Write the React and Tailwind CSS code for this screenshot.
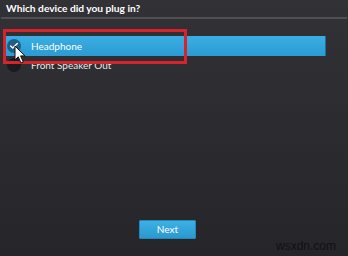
import { Check } from "lucide-react";

function Radio({ checked }) {
  return (
    <span
      className={
        checked
          ? "flex h-[14px] w-[14px] items-center justify-center rounded-full bg-[#1f5f86]"
          : "flex h-[14px] w-[14px] items-center justify-center rounded-full bg-[#1b1b1d]"
      }
    >
      {checked && <Check size={10} strokeWidth={3.5} className="text-white" />}
    </span>
  );
}

export default function App() {
  return (
    <div
      className="relative flex h-[256px] w-[348px] flex-col overflow-hidden bg-gradient-to-b from-[#323135] to-[#262529] text-white"
      style={{ fontFamily: 'Lato, "Open Sans", sans-serif' }}
    >
      <header className="flex h-[17px] items-center px-[6px]">
        <h1 className="text-[10.2px] font-bold leading-none">Which device did you plug in?</h1>
      </header>
      <div className="mx-[1px] h-[2px] bg-[#4f4e52]" />

      <ul className="mt-[17px] flex flex-col">
        <li className="ml-[4px] flex h-[20px] w-[322px] items-center gap-[10px] border-r border-[#1e6e9c] bg-gradient-to-b from-[#3aaee3] to-[#2b9bd3] pl-[3px]">
          <Radio checked />
          <span className="text-[10px] leading-none">Headphone</span>
        </li>
        <li className="flex h-[17px] items-center gap-[10px] pl-[7px]">
          <Radio />
          <span className="text-[10px] leading-none text-[#e8e8ea]">Front Speaker Out</span>
        </li>
      </ul>

      <div className="mt-auto mb-[17px] flex justify-center pr-[13px]">
        <button
          type="button"
          className="h-[19px] w-[57px] rounded-[1px] border border-[#2686b8] bg-gradient-to-b from-[#3cb0e4] to-[#2b99d0] text-[10px] text-white"
        >
          Next
        </button>
      </div>

      <div className="pointer-events-none absolute left-[3px] top-[29px] h-[35px] w-[184px] border-[3px] border-[#d8232c]" />

      <svg
        className="pointer-events-none absolute left-[14px] top-[45px]"
        width="13"
        height="19"
        viewBox="0 0 13 19"
      >
        <path d="M1 1 L1 15 L4.2 11.8 L7 18 L9.3 17 L6.6 10.9 L11 10.9 Z" fill="#ffffff" stroke="#111" strokeWidth="1" />
      </svg>

      <span
        className="absolute right-[12px] bottom-[4px] text-[12px] leading-none text-[#111113]"
        style={{ fontFamily: '"Liberation Sans", sans-serif' }}
      >
        wsxdn.com
      </span>
    </div>
  );
}
